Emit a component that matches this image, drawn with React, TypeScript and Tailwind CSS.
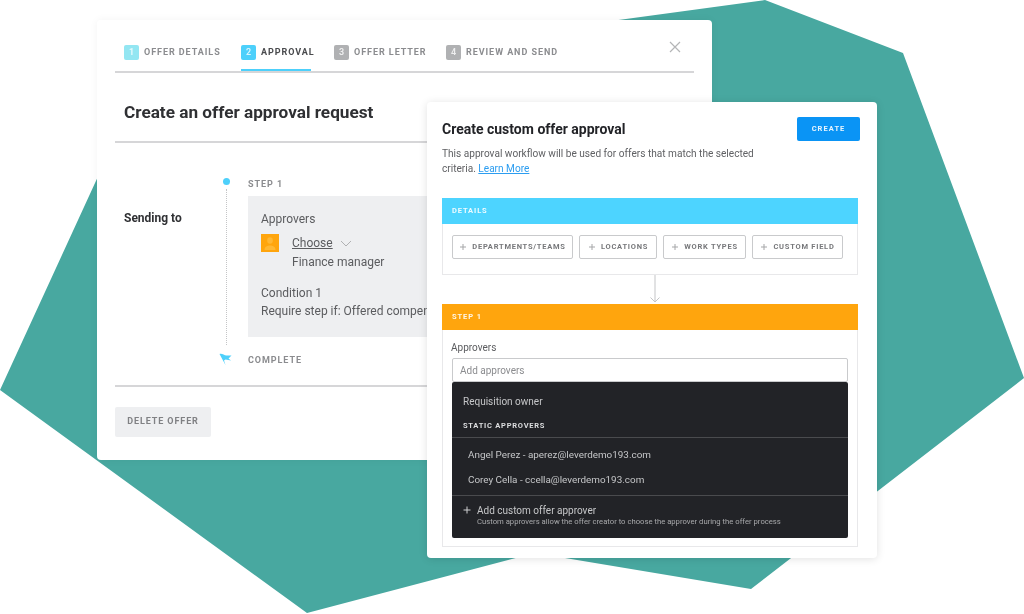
import React from "react";

const font = "font-['Roboto','Noto_Sans',sans-serif]";

function Tab({ n, label, badge, text, w, active = false }: { n: string; label: string; badge: string; text: string; w: string; active?: boolean }) {
  return (
    <div className={`relative flex h-[28px] items-start pt-[2px] ${w}`}>
      <span className={`flex h-[15px] w-[15px] items-center justify-center rounded-[2px] text-[9px] font-semibold text-white/80 ${badge}`}>{n}</span>
      <span className={`ml-[5px] whitespace-nowrap text-[9px] font-bold leading-[15px] tracking-[0.105em] ${text}`}>{label}</span>
      {active && <span className="absolute bottom-0 left-0 h-[2px] w-[70px] bg-[#4dd0fb]" />}
    </div>
  );
}

function Chip({ label, w }: { label: string; w: string }) {
  return (
    <div className={`flex h-[24px] items-center justify-center gap-[5px] rounded-[2px] border border-[#c9cacc] bg-white text-[7.5px] font-bold tracking-[0.1em] text-[#77787b] ${w}`}>
      <svg width="8" height="8" viewBox="0 0 8 8" className="shrink-0"><path d="M4 1v6M1 4h6" stroke="#a5a6a8" strokeWidth="1" /></svg>
      <span className="whitespace-nowrap">{label}</span>
    </div>
  );
}

function OfferCard() {
  return (
    <div className="relative ml-[97px] h-[440px] w-[615px] overflow-hidden rounded-[4px] bg-white pl-[18px] pr-[18px] pt-[23px] shadow-[0_0_8px_rgba(0,0,0,0.05)] blur-[0.35px]">
      <div className="flex h-[30px] items-start border-b-[2px] border-[#d6d6d8] pl-[9px]">
        <Tab n="1" label="OFFER DETAILS" badge="bg-[#93e6f2]" text="text-[#8b8c8f]" w="w-[117px]" />
        <Tab n="2" label="APPROVAL" badge="bg-[#4dd0fb]" text="text-[#4a4b4e]" w="w-[93px]" active />
        <Tab n="3" label="OFFER LETTER" badge="bg-[#b0b1b3]" text="text-[#8b8c8f]" w="w-[112px]" />
        <Tab n="4" label="REVIEW AND SEND" badge="bg-[#b0b1b3]" text="text-[#8b8c8f]" w="w-[120px]" />
      </div>
      <svg width="12" height="12" viewBox="0 0 12 12" className="absolute left-[572px] top-[21px]"><path d="M1 1l10 10M11 1L1 11" stroke="#b4b5b7" strokeWidth="1.2" /></svg>

      <h1 className="ml-[9px] mt-[26px] text-[17.2px] font-bold leading-[27px] text-[#2f3033]">Create an offer approval request</h1>
      <div className="mt-[15px] h-[2px] bg-[#d6d6d8]" />

      <div className="mt-[34px] flex h-[186px]">
        <div className="ml-[9px] w-[99px] pt-[33px] text-[12px] font-bold leading-[16px] text-[#303134]">Sending to</div>
        <div className="relative w-[25px]">
          <span className="absolute left-0 top-[1px] h-[7px] w-[7px] rounded-full bg-[#4dd0fb]" />
          <span className="absolute left-[3px] top-[12px] h-[156px] border-l border-dotted border-[#c4c5c7]" />
          <svg width="13" height="13" viewBox="0 0 13 13" className="absolute left-[-4px] top-[176px]"><path d="M0.500 1c2.500-1 4.500 1.500 7 1.500L12.500 2.500 9.500 5.500 12 7.500 6.500 6.500 5 7.500l1.500 4.500L4 7.500 0.500 1z" fill="#4dd0fb" /></svg>
        </div>
        <div className="w-[400px] min-w-0">
          <div className="pt-[2px] text-[9px] font-bold leading-[11px] tracking-[0.105em] text-[#8b8c8f]">STEP 1</div>
          <div className="mt-[6px] h-[141px] bg-[#eeeff1] pl-[13px] pt-[14px] text-[12px] leading-[18px] text-[#5b5c5f]">
            <div>Approvers</div>
            <div className="mt-[6px] flex">
              <div className="flex h-[18px] w-[18px] items-center justify-center bg-[#ffa50d]">
                <svg width="14" height="14" viewBox="0 0 14 14"><ellipse cx="7" cy="4.500" rx="2.800" ry="3.200" fill="#ffb733" /><path d="M1.500 14c0-3.500 3-4.500 5.500-4.500s5.500 1 5.500 4.500z" fill="#ffb733" /></svg>
              </div>
              <div className="ml-[13px]">
                <div className="flex items-center">
                  <span className="underline">Choose</span>
                  <svg width="12" height="7" viewBox="0 0 12 7" className="ml-[7px]"><path d="M1 1l5 5 5-5" fill="none" stroke="#b0b1b3" strokeWidth="1" /></svg>
                </div>
                <div className="pt-[1px]">Finance manager</div>
              </div>
            </div>
            <div className="mt-[13px]">Condition 1</div>
            <div className="whitespace-nowrap">Require step if: Offered compensation</div>
          </div>
          <div className="mt-[18px] text-[9px] font-bold leading-[11px] tracking-[0.105em] text-[#8b8c8f]">COMPLETE</div>
        </div>
      </div>

      <div className="mt-[22px] h-[2px] bg-[#d6d6d8]" />
      <button className="mt-[20px] flex h-[30px] w-[96px] items-center justify-center rounded-[2px] bg-[#eeeff1] text-[9px] font-bold tracking-[0.1em] text-[#808184]">DELETE OFFER</button>
    </div>
  );
}

function ApprovalCard() {
  return (
    <div className="absolute left-[427px] top-[102px] h-[456px] w-[450px] rounded-[4px] bg-white px-[15px] pt-[15px] shadow-[0_1px_8px_rgba(0,0,0,0.12)] blur-[0.35px]">
      <div className="flex items-start justify-between pr-[2px]">
        <h2 className="pt-[2px] text-[14px] font-bold leading-[20px] text-[#222327]">Create custom offer approval</h2>
        <button className="h-[24px] w-[63px] rounded-[2px] bg-[#0a94f5] text-[7.5px] font-bold tracking-[0.14em] text-white/90">CREATE</button>
      </div>
      <p className="mt-[6px] w-[330px] text-[10.1px] leading-[14.5px] text-[#606164]">
        This approval workflow will be used for offers that match the selected criteria. <span className="text-[#2c9df0] underline">Learn More</span>
      </p>

      <div className="mt-[22px] w-[416px] border border-t-0 border-[#e8e8ea]">
        <div className="-mx-px flex h-[26px] items-center bg-[#4dd4ff] pl-[10px] text-[7.5px] font-bold tracking-[0.12em] text-white/90">DETAILS</div>
        <div className="flex gap-[6px] pb-[15px] pl-[9px] pt-[11px]">
          <Chip label="DEPARTMENTS/TEAMS" w="w-[121px]" />
          <Chip label="LOCATIONS" w="w-[78px]" />
          <Chip label="WORK TYPES" w="w-[83px]" />
          <Chip label="CUSTOM FIELD" w="w-[91px]" />
        </div>
      </div>

      <div className="flex h-[29px] w-[416px] pl-[207px]">
        <svg width="12" height="28" viewBox="0 0 12 28"><path d="M6 0v27M1.500 22.500L6 27l4.500-4.500" fill="none" stroke="#c4c5c7" strokeWidth="1" /></svg>
      </div>

      <div className="w-[416px] border border-t-0 border-[#e8e8ea]">
        <div className="-mx-px flex h-[26px] items-center bg-[#ffa50d] pl-[10px] text-[7.5px] font-bold tracking-[0.12em] text-white/90">STEP 1</div>
        <div className="px-[9px] pb-[8px] pt-[11px]">
          <div className="-ml-px text-[10px] leading-[14px] text-[#5b5c5f]">Approvers</div>
          <div className="mt-[3px] flex h-[24px] items-center rounded-[2px] border border-[#c9cacc] pl-[7px] text-[10px] text-[#8b8c8f]">Add approvers</div>
          <div className="rounded-[2px] bg-[#222327] text-[#c6c7c9]">
            <div className="px-[11px] pt-[12px] text-[10px] leading-[16px]">Requisition owner</div>
            <div className="border-b border-[#4a4b4e] px-[11px] pb-[6px] pt-[10px] text-[7.5px] font-bold leading-[11px] tracking-[0.1em] text-[#dcdddf]">STATIC APPROVERS</div>
            <div className="border-b border-[#4a4b4e] pb-[3px] pl-[16px] pt-[4px] text-[9.9px] leading-[25px]">
              <div>Angel Perez - aperez@leverdemo193.com</div>
              <div>Corey Cella - ccella@leverdemo193.com</div>
            </div>
            <div className="flex pb-[12px] pl-[11px] pt-[7px]">
              <svg width="8" height="8" viewBox="0 0 8 8" className="mt-[3px] shrink-0"><path d="M4 .5v7M.5 4h7" stroke="#d0d1d3" strokeWidth="1" /></svg>
              <div className="ml-[6px]">
                <div className="text-[10px] leading-[15px]">Add custom offer approver</div>
                <div className="whitespace-nowrap text-[7.7px] leading-[8px] text-[#a8a9ab]">Custom approvers allow the offer creator to choose the approver during the offer process</div>
              </div>
            </div>
          </div>
        </div>
      </div>
    </div>
  );
}

export default function App() {
  return (
    <div className={`relative h-[614px] w-[1024px] overflow-hidden bg-white pt-[20px] ${font}`}>
      <svg width="1024" height="614" viewBox="0 0 1024 614" className="absolute left-0 top-0">
        <polygon points="0,390 140,85 765,0 903,53 1024,378 751,589 535,553 307,613" fill="#48a8a0" />
      </svg>
      <OfferCard />
      <ApprovalCard />
    </div>
  );
}
